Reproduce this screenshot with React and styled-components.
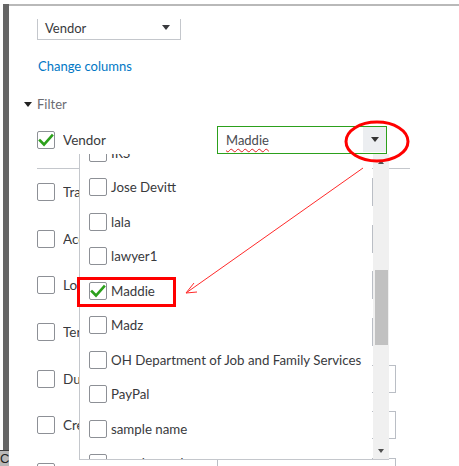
import React from "react";
import styled, { createGlobalStyle } from "styled-components";

const GlobalStyle = createGlobalStyle`
  html, body { margin: 0; padding: 0; background: #ffffff; }
  body { font-family: Lato, "Open Sans", "Liberation Sans", sans-serif; color: #393a3d; }
`;

const Page = styled.div`
  position: relative;
  width: 459px;
  height: 466px;
  overflow: hidden;
  display: flex;
  padding-top: 4px;
  box-sizing: border-box;
  background: #ffffff;
`;

const Rail = styled.div`
  width: 6px;
  margin-left: 3px;
  display: flex;
  flex-direction: column;
  background: #666666;
`;

const RailFill = styled.div`
  flex: 1;
`;

const RailFoot = styled.div`
  height: 15px;
  margin-left: -3px;
  width: 9px;
  border-top: 1px solid #3d3d3d;
  background: #b9b9b9;
  color: #222;
  font-size: 13px;
  line-height: 15px;
  overflow: hidden;
  font-family: "Liberation Sans", sans-serif;
`;

const Panel = styled.div`
  flex: 1;
  border-top: 2px solid #b9b9b9;
  padding-left: 28px;
  display: flex;
  flex-direction: column;
  overflow: hidden;
  & > * { flex-shrink: 0; }
`;

const Select = styled.div`
  margin-top: 13px;
  width: 144px;
  height: 21px;
  box-sizing: border-box;
  border: 1px solid #c4c7cc;
  border-top: none;
  display: flex;
  align-items: center;
  justify-content: space-between;
  padding: 0 10px 3px 7px;
  font-size: 13px;
`;

const Caret = styled.span`
  width: 0;
  height: 0;
  border-left: ${(p) => p.$size || 4}px solid transparent;
  border-right: ${(p) => p.$size || 4}px solid transparent;
  border-top: ${(p) => (p.$size || 4) + 1}px solid ${(p) => p.$color || "#393a3d"};
`;

const Link = styled.a`
  margin-top: 17px;
  height: 18px;
  line-height: 18px;
  font-size: 13px;
  color: #0077c5;
  text-decoration: none;
  padding-left: 1px;
`;

const SectionHead = styled.div`
  margin-top: 20px;
  margin-left: -13px;
  height: 18px;
  display: flex;
  align-items: center;
  gap: 5px;
  font-size: 13px;
  color: #6b6c72;
`;

const FilterRow = styled.div`
  display: flex;
  align-items: center;
  height: ${(p) => p.$h}px;
  margin-top: ${(p) => p.$mt || 0}px;
`;

const Box = styled.span`
  flex: none;
  width: 18px;
  height: 18px;
  box-sizing: border-box;
  border: 1px solid #8d9096;
  border-radius: 2px;
  background: #fff;
  display: flex;
  align-items: center;
  justify-content: center;
`;

const Label = styled.span`
  width: 154px;
  margin-left: 8px;
  font-size: ${(p) => p.$fs || 13}px;
  color: #393a3d;
  white-space: nowrap;
  overflow: hidden;
`;

const Field = styled.div`
  width: ${(p) => p.$w}px;
  height: 28px;
  box-sizing: border-box;
  border: 1px solid ${(p) => (p.$active ? "#2ca01c" : "#babec5")};
  display: flex;
  align-items: stretch;
`;

const FieldText = styled.span`
  flex: 1;
  padding-left: 8px;
  font-size: 13px;
  line-height: 26px;
  color: #4a4b50;
`;

const Misspelled = styled.span`
  text-decoration: underline wavy #e02020;
  text-decoration-thickness: 1px;
  text-underline-offset: 3px;
`;

const FieldButton = styled.span`
  width: 23px;
  margin: 0 0 1px;
  background: #eceef1;
  display: flex;
  align-items: center;
  justify-content: center;
`;

const Divider = styled.div`
  margin-top: 14px;
  width: 373px;
  height: 1px;
  background: #c4c7cc;
`;

const Menu = styled.div`
  position: absolute;
  left: 79px;
  top: 154px;
  width: 310px;
  height: 306px;
  box-sizing: border-box;
  border-left: 1px solid #c4c7cc;
  border-bottom: 1px solid #c4c7cc;
  display: flex;
`;

const MenuList = styled.div`
  width: 292px;
  background: #fff;
  overflow: hidden;
`;

const MenuScroll = styled.div`
  margin-top: -18.75px;
`;

const MenuItem = styled.div`
  height: 34.5px;
  display: flex;
  align-items: center;
  padding-left: 9px;
  gap: 4px;
  font-size: 13.3px;
  color: #393a3d;
  white-space: nowrap;
`;

const Scrollbar = styled.div`
  margin-left: 1px;
  width: 16px;
  background: #f0f0f0;
  display: flex;
  flex-direction: column;
  align-items: center;
`;

const ScrollArrow = styled.span`
  height: 16px;
  display: flex;
  align-items: center;
  justify-content: center;
`;

const UpCaret = styled.span`
  width: 0;
  height: 0;
  border-left: 3.5px solid transparent;
  border-right: 3.5px solid transparent;
  border-bottom: 4px solid #505050;
`;

const Track = styled.div`
  flex: 1;
  width: 100%;
  display: flex;
  flex-direction: column;
  align-items: center;
`;

const Thumb = styled.div`
  margin-top: ${(p) => p.$top}px;
  width: 13px;
  height: ${(p) => p.$h}px;
  background: #c1c1c1;
`;

const Marks = styled.svg`
  position: absolute;
  left: 0;
  top: 0;
  pointer-events: none;
`;

const Check = () => (
  <svg width="16" height="14" viewBox="0 0 16 14">
    <path d="M2 7.5 L6 11.5 L14 2.5" fill="none" stroke="#2ca01c" strokeWidth="2.6" strokeLinecap="square" />
  </svg>
);

const rows = [
  { label: "Transaction Type", field: 156 },
  { label: "Account", field: 156 },
  { label: "Location", field: 156 },
  { label: "Terms", field: 156 },
  { label: "Due Date", field: 179 },
  { label: "Create Date", field: 179 },
  { label: "Class", field: 179 },
];

const vendors = [
  "IRS",
  "Jose Devitt",
  "lala",
  "lawyer1",
  "Maddie",
  "Madz",
  "OH Department of Job and Family Services",
  "PayPal",
  "sample name",
  "sample vendor",
];

export default function App() {
  return (
    <>
      <GlobalStyle />
      <Page>
        <Rail>
          <RailFill />
          <RailFoot>C</RailFoot>
        </Rail>
        <Panel>
          <Select>
            <span>Vendor</span>
            <Caret />
          </Select>
          <Link href="#">Change columns</Link>
          <SectionHead>
            <Caret $size={4} $color="#222" />
            <span>Filter</span>
          </SectionHead>
          <FilterRow $h={28} $mt={13}>
            <Box>
              <Check />
            </Box>
            <Label $fs={13.5}>Vendor</Label>
            <Field $w={170} $active>
              <FieldText>
                <Misspelled>Maddie</Misspelled>
              </FieldText>
              <FieldButton>
                <Caret $size={4} $color="#333" />
              </FieldButton>
            </Field>
          </FilterRow>
          <Divider />
          {rows.map((r) => (
            <FilterRow key={r.label} $h={46.6}>
              <Box />
              <Label $fs={13.5}>{r.label}</Label>
              <Field $w={r.field} />
            </FilterRow>
          ))}
        </Panel>

        <Menu>
          <MenuList>
            <MenuScroll>
              {vendors.map((v) => (
                <MenuItem key={v}>
                  <Box>{v === "Maddie" && <Check />}</Box>
                  <span>{v}</span>
                </MenuItem>
              ))}
            </MenuScroll>
          </MenuList>
          <Scrollbar>
            <ScrollArrow>
              <UpCaret />
            </ScrollArrow>
            <Track>
              <Thumb $top={100} $h={75} />
            </Track>
            <ScrollArrow>
              <Caret $size={3.5} $color="#505050" />
            </ScrollArrow>
          </Scrollbar>
        </Menu>

        <Marks width="459" height="466" viewBox="0 0 459 466">
          <ellipse cx="377" cy="141.5" rx="31" ry="19.5" fill="none" stroke="#ff0000" strokeWidth="3" />
          <line x1="363" y1="168" x2="186" y2="293" stroke="#ff2a2a" strokeWidth="1" />
          <polyline points="194,283 186,293 197,292" fill="none" stroke="#ff2a2a" strokeWidth="1" />
          <rect x="78.5" y="278.5" width="96" height="27" fill="none" stroke="#ff0000" strokeWidth="3" />
        </Marks>
      </Page>
    </>
  );
}
